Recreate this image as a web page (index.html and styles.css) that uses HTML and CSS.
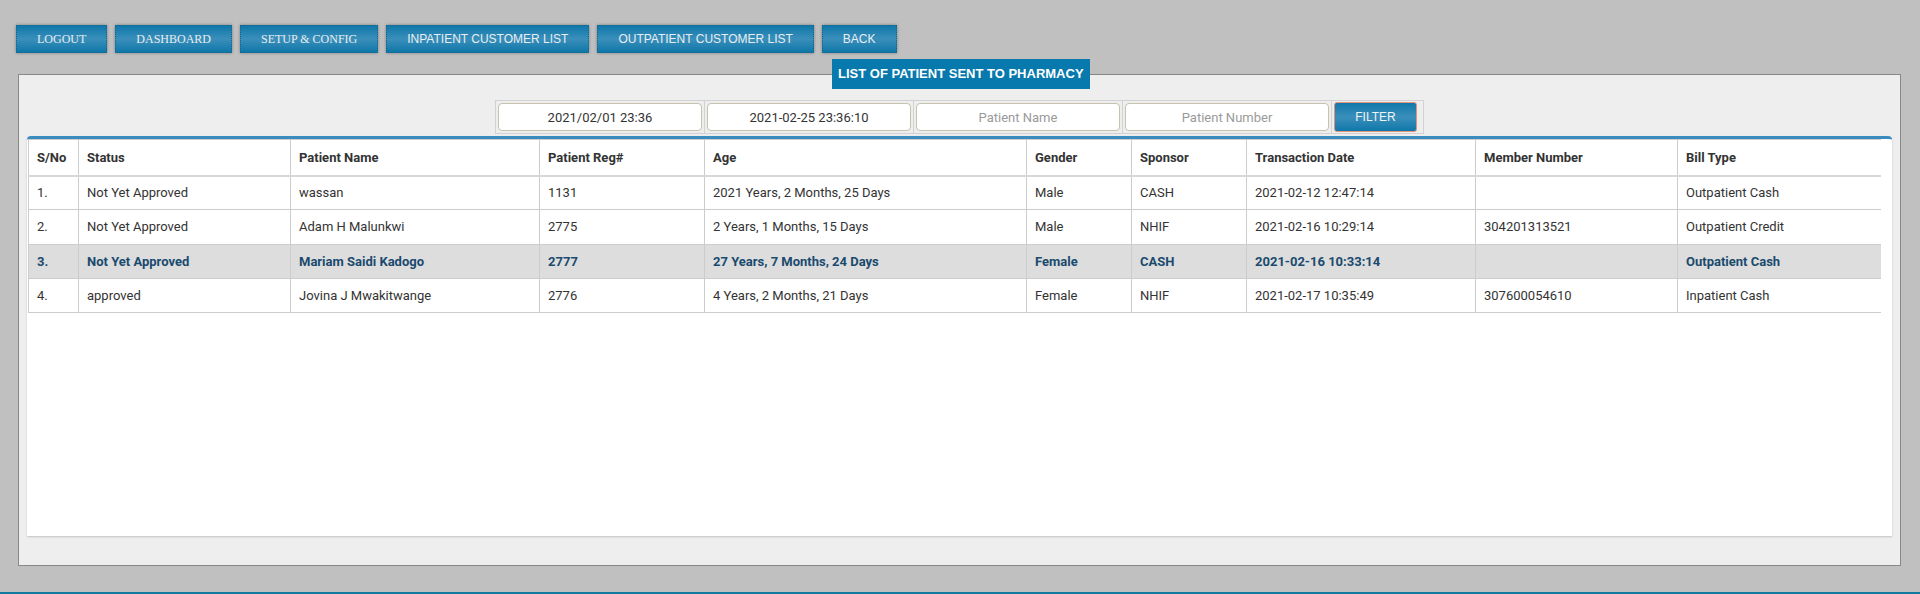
FILE: index.html
```html
<!DOCTYPE html>
<html lang="en">
<head>
<meta charset="utf-8">
<title>List of Patient Sent to Pharmacy</title>
<link rel="stylesheet" href="styles.css">
</head>
<body>
<nav class="nav">
  <a class="btn serif" href="#">LOGOUT</a>
  <a class="btn serif" href="#">DASHBOARD</a>
  <a class="btn serif" href="#">SETUP &amp; CONFIG</a>
  <a class="btn" href="#">INPATIENT CUSTOMER LIST</a>
  <a class="btn" href="#">OUTPATIENT CUSTOMER LIST</a>
  <a class="btn" href="#">BACK</a>
</nav>

<fieldset class="panel">
  <legend class="panel-title">LIST OF PATIENT SENT TO PHARMACY</legend>
  <table class="filter">
    <tr>
      <td><input class="field" type="text" value="2021/02/01 23:36"></td>
      <td><input class="field" type="text" value="2021-02-25 23:36:10"></td>
      <td><input class="field" type="text" placeholder="Patient Name"></td>
      <td><input class="field" type="text" placeholder="Patient Number"></td>
      <td class="filter-cell"><button class="filter-btn" type="button">FILTER</button></td>
    </tr>
  </table>
  <div class="box">
    <table class="grid">
      <colgroup>
        <col class="c1"><col class="c2"><col class="c3"><col class="c4"><col class="c5">
        <col class="c6"><col class="c7"><col class="c8"><col class="c9"><col class="c10">
      </colgroup>
      <thead>
        <tr>
          <th>S/No</th><th>Status</th><th>Patient Name</th><th>Patient Reg#</th><th>Age</th>
          <th>Gender</th><th>Sponsor</th><th>Transaction Date</th><th>Member Number</th><th>Bill Type</th>
        </tr>
      </thead>
      <tbody>
        <tr>
          <td>1.</td><td>Not Yet Approved</td><td>wassan</td><td>1131</td><td>2021 Years, 2 Months, 25 Days</td>
          <td>Male</td><td>CASH</td><td>2021-02-12 12:47:14</td><td></td><td>Outpatient Cash</td>
        </tr>
        <tr>
          <td>2.</td><td>Not Yet Approved</td><td>Adam H Malunkwi</td><td>2775</td><td>2 Years, 1 Months, 15 Days</td>
          <td>Male</td><td>NHIF</td><td>2021-02-16 10:29:14</td><td>304201313521</td><td>Outpatient Credit</td>
        </tr>
        <tr class="active">
          <td>3.</td><td>Not Yet Approved</td><td>Mariam Saidi Kadogo</td><td>2777</td><td>27 Years, 7 Months, 24 Days</td>
          <td>Female</td><td>CASH</td><td>2021-02-16 10:33:14</td><td></td><td>Outpatient Cash</td>
        </tr>
        <tr>
          <td>4.</td><td>approved</td><td>Jovina J Mwakitwange</td><td>2776</td><td>4 Years, 2 Months, 21 Days</td>
          <td>Female</td><td>NHIF</td><td>2021-02-17 10:35:49</td><td>307600054610</td><td>Inpatient Cash</td>
        </tr>
      </tbody>
    </table>
  </div>
</fieldset>

<footer class="footer"></footer>
</body>
</html>
```

FILE: styles.css
```css
* { box-sizing: border-box; }

html, body {
  margin: 0;
  padding: 0;
  height: 594px;
  overflow: hidden;
}

body {
  background: #c0c0c0;
  font-family: Roboto, "Liberation Sans", sans-serif;
  font-size: 13px;
  color: #333;
}

/* top navigation */
.nav {
  display: flex;
  gap: 8px;
  padding: 25px 0 0 16px;
}

.btn {
  display: block;
  height: 28px;
  line-height: 26px;
  padding: 0 20px;
  font-family: "Liberation Sans", Arial, sans-serif;
  font-size: 12px;
  color: #e6eef3;
  text-decoration: none;
  background: linear-gradient(to bottom, #0f78aa 0%, #3b8fba 50%, #0f77a9 100%);
  border: 1px dotted #14648c;
  box-shadow: 0 0 3px rgba(0, 0, 0, 0.35);
  white-space: nowrap;
}

.btn.serif {
  font-family: "Liberation Serif", "Times New Roman", serif;
}

/* panel */
.panel {
  margin: 6px 0 0 18px;
  width: 1883px;
  padding: 11px 8px 29px 8px;
  border: 1px solid #888;
  background: #eeeeee;
  min-inline-size: 0;
}

.panel-title {
  margin-left: 805px;
  padding: 0 6px;
  height: 30px;
  line-height: 30px;
  background: #0779ad;
  color: #fff;
  font-family: "Liberation Sans", Arial, sans-serif;
  font-weight: bold;
  font-size: 13px;
}

/* filter bar */
.filter {
  margin: 0 auto;
  border-collapse: collapse;
  background: #eeeeee;
}

.filter td {
  border: 1px solid #d2d2d2;
  padding: 2px;
}

.filter td.filter-cell {
  padding: 0 6px 0 2px;
}

.field {
  display: block;
  width: 204px;
  height: 28px;
  margin: 0;
  border: 1px solid #c6c2ad;
  border-radius: 4px;
  background: #fff;
  text-align: center;
  font-family: Roboto, "Liberation Sans", sans-serif;
  font-size: 13px;
  color: #333;
  padding: 0 6px;
}

.field::placeholder {
  color: #9a9a9a;
}

.filter-btn {
  display: block;
  width: 83px;
  height: 30px;
  margin: 0;
  border: 1px solid #e3937c;
  border-radius: 3px;
  background: linear-gradient(to bottom, #0f78aa 0%, #3b8fba 50%, #0f77a9 100%);
  color: #eef4f8;
  font-family: "Liberation Sans", Arial, sans-serif;
  font-size: 12px;
  padding: 0;
}

/* table box */
.box {
  margin-top: 2px;
  height: 400px;
  background: #fff;
  border-top: 3px solid #3a8cc0;
  border-radius: 4px 4px 0 0;
  box-shadow: 0 1px 2px rgba(0, 0, 0, 0.18);
}

.grid {
  margin-left: 1px;
  width: 1852px;
  table-layout: fixed;
  border-collapse: collapse;
}

.c1 { width: 50px; }
.c2 { width: 212px; }
.c3 { width: 249px; }
.c4 { width: 165px; }
.c5 { width: 322px; }
.c6 { width: 105px; }
.c7 { width: 115px; }
.c8 { width: 229px; }
.c9 { width: 202px; }
.c10 { width: 203px; }

.grid th,
.grid td {
  text-align: left;
  padding: 0 8px;
  border: 1px solid #cccccc;
  white-space: nowrap;
  overflow: hidden;
}

.grid th:last-child,
.grid td:last-child {
  border-right: none;
}

.grid th {
  height: 36px;
  font-weight: bold;
  color: #333;
  border-bottom: 2px solid #d8d8d8;
}

.grid td {
  height: 34.3px;
  color: #333;
}

.grid tr.active td {
  background: #dddddd;
  color: #1a4a6e;
  font-weight: bold;
}

/* footer line */
.footer {
  margin-top: 26px;
  height: 10px;
  background: #117a9e;
}
```
